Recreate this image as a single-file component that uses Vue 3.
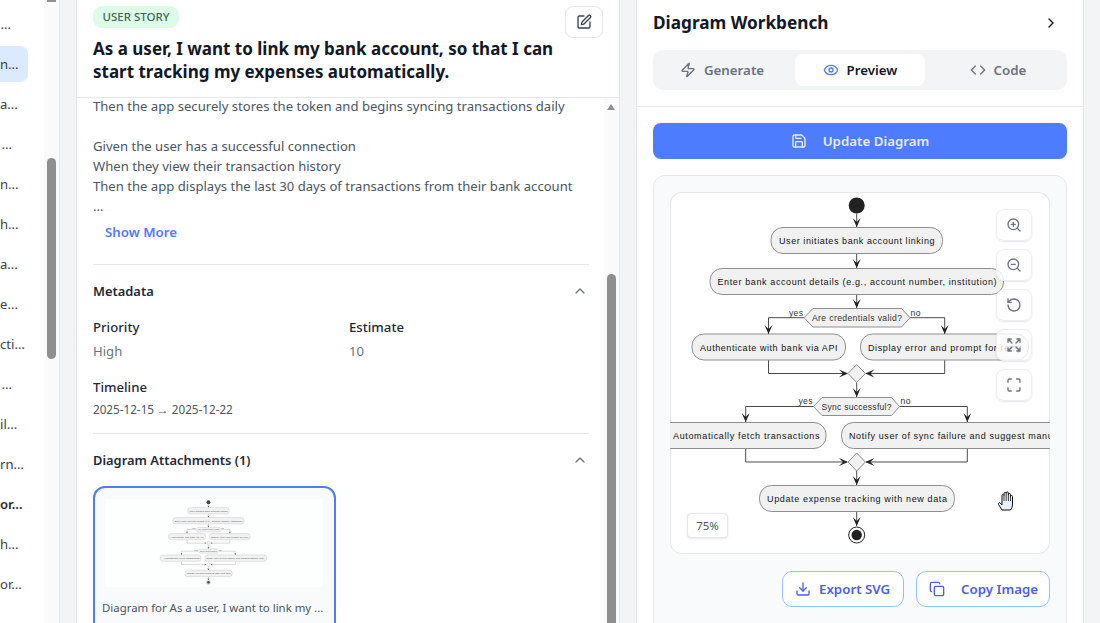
<script setup>
const criteria = `Then the app securely stores the token and begins syncing transactions daily

Given the user has a successful connection
When they view their transaction history
Then the app displays the last 30 days of transactions from their bank account
...`

const rows = [
  { text: '...', end: 11 },
  { text: 'n...', end: 14, active: true },
  { text: 'a...', end: 14 },
  { text: '...', end: 12 },
  { text: 'n...', end: 13 },
  { text: 'h...', end: 17 },
  { text: 'a...', end: 17 },
  { text: 'e...', end: 14 },
  { text: 'cti...', end: 19 },
  { text: '...', end: 12 },
  { text: 'il...', end: 16 },
  { text: 'rn...', end: 18 },
  { text: 'or...', end: 18, strong: true },
  { text: 'h...', end: 17 },
  { text: 'or...', end: 18 }
]

const nodes = [
  { x: 771, y: 227.5, w: 171.5, h: 26, text: 'User initiates bank account linking', tx: 779, tl: 155.5 },
  { x: 710, y: 268.5, w: 293.5, h: 26, text: 'Enter bank account details (e.g., account number, institution)', tx: 717.5, tl: 279 },
  { x: 692, y: 334, w: 153.5, h: 26, text: 'Authenticate with bank via API', tx: 700, tl: 137.5 },
  { x: 860.5, y: 334, w: 168, h: 26, text: 'Display error and prompt for retry', tx: 868, tl: 153 },
  { x: 658, y: 422.5, w: 168, h: 26, text: 'Automatically fetch transactions', tx: 673, tl: 146.5 },
  { x: 841.5, y: 422.5, w: 255, h: 26, text: 'Notify user of sync failure and suggest manual entry', tx: 849, tl: 238 },
  { x: 759.5, y: 485.5, w: 195, h: 26, text: 'Update expense tracking with new data', tx: 767, tl: 180 }
]

const decisions = [
  { points: '804,317.7 813,308.5 901.5,308.5 910,317.7 901.5,327 813,327', text: 'Are credentials valid?', tx: 812, ty: 321, tl: 90 },
  { points: '813.5,406.5 822,397.5 891.5,397.5 899.5,406.5 891.5,415.5 822,415.5', text: 'Sync successful?', tx: 821.5, ty: 409.5, tl: 70 }
]

const merges = ['848,373.5 856.7,364.5 865.4,373.5 856.7,382.5', '848,462 856.7,453 865.4,462 856.7,471']

const labels = [
  { text: 'yes', x: 789, y: 316, tl: 14 },
  { text: 'no', x: 910.5, y: 316, tl: 10 },
  { text: 'yes', x: 798.5, y: 404, tl: 14 },
  { text: 'no', x: 900.5, y: 404, tl: 10 }
]

const lines = [
  'M856.7 213.5V227', 'M856.7 253.5V268', 'M856.7 294.5V308',
  'M804 317.7H768.5V334', 'M910 317.7H944.7V334',
  'M768.5 360V373.5H847', 'M944.7 360V373.5H866',
  'M856.7 382.5V397', 'M813.5 406.5H745.7V422', 'M899.5 406.5H967.3V422',
  'M745.7 448.5V462H847', 'M967.3 448.5V462H866',
  'M856.7 471V485', 'M856.7 511.5V526'
]

const down = (x, y) => `M${x} ${y}L${x - 4} ${y - 9}L${x} ${y - 5}L${x + 4} ${y - 9}Z`
const right = (x, y) => `M${x} ${y}L${x - 9} ${y - 4}L${x - 5} ${y}L${x - 9} ${y + 4}Z`
const left = (x, y) => `M${x} ${y}L${x + 9} ${y - 4}L${x + 5} ${y}L${x + 9} ${y + 4}Z`

const arrows = [
  down(856.7, 227), down(856.7, 268), down(856.7, 308),
  down(768.5, 334), down(944.7, 334),
  right(848, 373.5), left(865.4, 373.5), down(856.7, 397),
  down(745.7, 422), down(967.3, 422),
  right(848, 462), left(865.4, 462), down(856.7, 485), down(856.7, 526)
]
</script>

<template>
  <div class="app">
    <aside class="side">
      <div class="side-list">
        <div v-for="(row, i) in rows" :key="i" class="side-row" :class="{ active: row.active, strong: row.strong }">
          <span class="side-text" :style="{ width: row.end + 'px' }">{{ row.text }}</span>
        </div>
      </div>
      <div class="side-track">
        <span class="side-top"></span>
        <span class="side-thumb"></span>
      </div>
    </aside>

    <main class="story">
      <header class="story-head">
        <div class="story-top">
          <span class="badge">USER STORY</span>
          <button class="edit">
            <svg class="i" viewBox="0 0 24 24" width="16" height="16"><path d="M12 3H5a2 2 0 0 0-2 2v14a2 2 0 0 0 2 2h14a2 2 0 0 0 2-2v-7"/><path d="M18.375 2.625a1 1 0 0 1 3 3l-9.013 9.014a2 2 0 0 1-.853.505l-2.873.84a.5.5 0 0 1-.62-.62l.84-2.873a2 2 0 0 1 .506-.852z"/></svg>
          </button>
        </div>
        <h1>As a user, I want to link my bank account, so that I can start tracking my expenses automatically.</h1>
      </header>
      <div class="story-scroll">
        <div class="story-body">
          <p class="criteria">{{ criteria }}</p>
          <a class="more">Show More</a>
          <section class="sec meta">
            <div class="sec-head">
              <h2>Metadata</h2>
              <svg class="i chev" viewBox="0 0 24 24" width="16" height="16"><path d="m18 15-6-6-6 6"/></svg>
            </div>
            <div class="meta-grid">
              <div><h3>Priority</h3><p>High</p></div>
              <div><h3>Estimate</h3><p>10</p></div>
            </div>
            <h3 class="tl">Timeline</h3>
            <p class="dates">2025-12-15 → 2025-12-22</p>
          </section>
          <section class="sec attach">
            <div class="sec-head">
              <h2>Diagram Attachments (1)</h2>
              <svg class="i chev" viewBox="0 0 24 24" width="16" height="16"><path d="m18 15-6-6-6 6"/></svg>
            </div>
            <div class="thumb-card">
              <svg class="thumb" viewBox="431 192 897 362" width="218" height="88"><use href="#activity" /></svg>
              <p>Diagram for As a user, I want to link my ...</p>
            </div>
          </section>
        </div>
        <div class="story-track">
          <span class="arrow-up"></span>
          <span class="story-thumb"></span>
        </div>
      </div>
    </main>

    <section class="bench">
      <div class="bench-head">
        <div class="bench-title">
          <h2>Diagram Workbench</h2>
          <svg class="i dark" viewBox="0 0 24 24" width="16" height="16"><path d="m9 18 6-6-6-6"/></svg>
        </div>
        <div class="tabs">
          <div class="tab">
            <svg class="i" viewBox="0 0 24 24" width="16" height="16"><path d="M4 14a1 1 0 0 1-.78-1.63l9.9-10.2a.5.5 0 0 1 .86.46l-1.92 6.02A1 1 0 0 0 13 10h7a1 1 0 0 1 .78 1.63l-9.9 10.2a.5.5 0 0 1-.86-.46l1.92-6.02A1 1 0 0 0 11 14z"/></svg>
            Generate
          </div>
          <div class="tab on">
            <svg class="i" viewBox="0 0 24 24" width="16" height="16"><path d="M2.062 12.348a1 1 0 0 1 0-.696 10.75 10.75 0 0 1 19.876 0 1 1 0 0 1 0 .696 10.75 10.75 0 0 1-19.876 0"/><circle cx="12" cy="12" r="3"/></svg>
            Preview
          </div>
          <div class="tab">
            <svg class="i" viewBox="0 0 24 24" width="16" height="16"><path d="m16 18 6-6-6-6"/><path d="m8 6-6 6 6 6"/></svg>
            Code
          </div>
        </div>
      </div>
      <div class="bench-body">
        <button class="update">
          <svg class="i" viewBox="0 0 24 24" width="16" height="16"><path d="M15.2 3a2 2 0 0 1 1.4.6l3.8 3.8a2 2 0 0 1 .6 1.4V19a2 2 0 0 1-2 2H5a2 2 0 0 1-2-2V5a2 2 0 0 1 2-2z"/><path d="M17 21v-7a1 1 0 0 0-1-1H8a1 1 0 0 0-1 1v7"/><path d="M7 3v4a1 1 0 0 0 1 1h7"/></svg>
          Update Diagram
        </button>
        <div class="stage">
          <div class="canvas">
            <svg class="diagram" viewBox="670 192 380 362" width="380" height="362">
              <g id="activity">
                <circle cx="856.7" cy="205.5" r="8" class="dot" />
                <path v-for="(d, i) in lines" :key="'l' + i" :d="d" class="ln" />
                <g v-for="(n, i) in nodes" :key="'n' + i">
                  <rect :x="n.x" :y="n.y" :width="n.w" :height="n.h" rx="12" class="box" />
                  <text :x="n.tx" :y="n.y + 16.5" :textLength="n.tl" class="t">{{ n.text }}</text>
                </g>
                <g v-for="(d, i) in decisions" :key="'d' + i">
                  <polygon :points="d.points" class="box" />
                  <text :x="d.tx" :y="d.ty" :textLength="d.tl" class="t small">{{ d.text }}</text>
                </g>
                <polygon v-for="(m, i) in merges" :key="'m' + i" :points="m" class="box" />
                <text v-for="(l, i) in labels" :key="'t' + i" :x="l.x" :y="l.y" :textLength="l.tl" class="t small">{{ l.text }}</text>
                <path v-for="(d, i) in arrows" :key="'a' + i" :d="d" class="dot" />
                <circle cx="856.7" cy="535" r="8" class="ring" />
                <circle cx="856.7" cy="535" r="5.2" class="dot" />
              </g>
            </svg>
            <div class="tools">
              <button class="tool"><svg class="i" viewBox="0 0 24 24" width="16" height="16"><circle cx="11" cy="11" r="8"/><path d="m21 21-4.3-4.3"/><path d="M11 8v6"/><path d="M8 11h6"/></svg></button>
              <button class="tool"><svg class="i" viewBox="0 0 24 24" width="16" height="16"><circle cx="11" cy="11" r="8"/><path d="m21 21-4.3-4.3"/><path d="M8 11h6"/></svg></button>
              <button class="tool"><svg class="i" viewBox="0 0 24 24" width="16" height="16"><path d="M3 12a9 9 0 1 0 9-9 9.75 9.75 0 0 0-6.74 2.74L3 8"/><path d="M3 3v5h5"/></svg></button>
              <button class="tool"><svg class="i" viewBox="0 0 24 24" width="16" height="16"><path d="m21 21-6-6m6 6v-4.8m0 4.8h-4.8"/><path d="M3 16.2V21m0 0h4.8M3 21l6-6"/><path d="M21 7.8V3m0 0h-4.8M21 3l-6 6"/><path d="M3 7.8V3m0 0h4.8M3 3l6 6"/></svg></button>
              <button class="tool"><svg class="i" viewBox="0 0 24 24" width="16" height="16"><path d="M8 3H5a2 2 0 0 0-2 2v3"/><path d="M21 8V5a2 2 0 0 0-2-2h-3"/><path d="M3 16v3a2 2 0 0 0 2 2h3"/><path d="M16 21h3a2 2 0 0 0 2-2v-3"/></svg></button>
            </div>
            <div class="zoom-chip">75%</div>
            <svg class="hand" viewBox="0 0 20 22" width="20" height="22">
              <path d="M5 20 1.5 14.5c-.8-1.2.8-2.4 1.8-1.4L5 15V5.5c0-1.4 2-1.4 2 0V3.5c0-1.5 2.2-1.5 2.2 0V3c0-1.5 2.2-1.5 2.2 0v1.5c0-1.4 2.1-1.4 2.1 0v2c0-1.3 2-1.3 2 0V14c0 3-1 4.5-2 6z" class="glove"/>
              <path d="M7 5.5V11M9.2 3.5V11M11.4 4V11M13.5 6V11" class="glove-line"/>
            </svg>
          </div>
          <div class="actions">
            <button class="act export">
              <svg class="i" viewBox="0 0 24 24" width="16" height="16"><path d="M12 15V3"/><path d="M21 15v4a2 2 0 0 1-2 2H5a2 2 0 0 1-2-2v-4"/><path d="m7 10 5 5 5-5"/></svg>
              Export SVG
            </button>
            <button class="act copy">
              <svg class="i" viewBox="0 0 24 24" width="16" height="16"><rect x="8" y="8" width="14" height="14" rx="2"/><path d="M4 16c-1.1 0-2-.9-2-2V4c0-1.1.9-2 2-2h10c1.1 0 2 .9 2 2"/></svg>
              Copy Image
            </button>
          </div>
        </div>
      </div>
    </section>
  </div>
</template>

<style>
html, body { margin: 0; overflow: hidden; }
</style>

<style scoped>
.app {
  width: 1100px;
  height: 623px;
  display: flex;
  overflow: hidden;
  background: #f3f4f6;
  font-family: "Noto Sans", "Open Sans", sans-serif;
  color: #111827;
}
h1, h2, h3, p { margin: 0; }
button { font-family: inherit; cursor: pointer; }
.i { fill: none; stroke: currentColor; stroke-width: 2; stroke-linecap: round; stroke-linejoin: round; flex: none; display: block; }

.side {
  width: 60px;
  flex: none;
  display: flex;
  background: #fff;
  border-right: 1px solid #e5e7eb;
  box-sizing: border-box;
}
.side-list { width: 44px; padding-top: 6px; display: flex; flex-direction: column; gap: 4px; }
.side-row { width: 28px; height: 36px; display: flex; align-items: center; border-radius: 0 8px 8px 0; font-size: 13.1px; color: #374151; }
.side-row.active { background: #dbeafe; }
.side-row.strong { font-weight: 600; color: #1f2937; }
.side-text { display: block; text-align: right; white-space: nowrap; }
.side-track { width: 15px; background: #fafafa; position: relative; }
.side-top { position: absolute; left: 3px; top: 0; width: 9px; height: 2px; background: #8f8f8f; }
.side-thumb { position: absolute; left: 3px; top: 158px; width: 9px; height: 201px; border-radius: 5px; background: #8f8f8f; }

.story {
  width: 544px;
  margin-left: 16px;
  flex: none;
  display: flex;
  flex-direction: column;
  background: #fff;
  border: solid #e5e7eb;
  border-width: 0 1px;
  box-sizing: border-box;
}
.story-head { height: 98px; box-sizing: border-box; padding: 6px 16px 0; border-bottom: 1px solid #e5e7eb; flex: none; }
.story-top { display: flex; justify-content: space-between; align-items: flex-start; height: 32px; }
.badge { height: 22px; line-height: 22px; padding: 0 9.5px; border-radius: 9px; background: #dcfce7; color: #3f6659; font-size: 11.5px; font-weight: 500; }
.edit { width: 38px; height: 32px; background: #fff; border: 1px solid #e5e7eb; border-radius: 8px; display: flex; align-items: center; justify-content: center; color: #374151; padding: 0; }
.story-head h1 { font-size: 17px; line-height: 23px; font-weight: 700; margin-top: -1px; color: #111827; width: 490px; }
.story-scroll { flex: 1; min-height: 0; display: flex; overflow: hidden; }
.story-body { flex: 1; padding: 0 15px 0 16px; margin-top: -2px; min-width: 0; }
.criteria { font-size: 13.1px; line-height: 20px; color: #4b5563; white-space: pre-line; }
.more { display: block; margin: 6px 0 0 12px; font-size: 13.3px; line-height: 20px; font-weight: 600; color: #4d7cfe; }
.sec { border-top: 1px solid #e5e7eb; }
.meta { margin-top: 22px; padding: 16px 0 15px; }
.attach { padding-top: 16px; }
.sec-head { display: flex; justify-content: space-between; align-items: center; height: 20px; padding-right: 1px; }
.sec-head h2 { font-size: 12.9px; line-height: 20px; font-weight: 600; color: #1f2937; }
.chev { color: #6b7280; }
.meta-grid { display: grid; grid-template-columns: 256px 1fr; margin-top: 16px; }
h3 { font-size: 13.2px; line-height: 20px; font-weight: 500; color: #1f2937; }
.meta-grid p { margin-top: 4px; font-size: 13.1px; line-height: 20px; color: #6b7280; }
.tl { margin-top: 16px; }
.dates { margin-top: 3px; font-size: 11.7px; line-height: 18px; color: #4b5563; }
.thumb-card { width: 243px; height: 160px; margin-top: 16px; box-sizing: border-box; padding: 11px 10px; border: 2px solid #4d7cfe; border-radius: 12px; background: #f8fafc; }
.thumb { display: block; background: #fff; opacity: .85; }
.thumb-card p { margin: 12px 0 0 -3px; font-size: 11.4px; line-height: 18px; color: #4b5563; white-space: nowrap; }
.story-track { width: 15px; flex: none; background: #fafafa; position: relative; }
.arrow-up { position: absolute; left: 3px; top: 6px; border: solid transparent; border-width: 0 4.5px 6px; border-bottom-color: #8f8f8f; }
.story-thumb { position: absolute; left: 3px; top: 176px; width: 9px; height: 400px; border-radius: 5px; background: #8f8f8f; }

.bench {
  width: 448px;
  margin-left: 16px;
  flex: none;
  background: #fff;
  border: solid #e5e7eb;
  border-width: 0 1px;
  box-sizing: border-box;
  display: flex;
  flex-direction: column;
}
.bench-head { padding: 10px 16px 16px; border-bottom: 1px solid #e5e7eb; }
.bench-title { display: flex; justify-content: space-between; align-items: center; height: 26px; padding-right: 8px; }
.bench-title h2 { font-size: 17.2px; line-height: 26px; font-weight: 700; color: #111827; }
.dark { color: #111827; }
.tabs { margin-top: 14px; height: 40px; box-sizing: border-box; padding: 4px; display: flex; gap: 8px; background: #f3f4f6; border-radius: 10px; }
.tab { flex: 1; display: flex; align-items: center; justify-content: center; gap: 8px; border-radius: 8px; font-size: 13.3px; font-weight: 600; color: #6b7280; }
.tab.on { background: #fff; color: #111827; }
.tab.on .i { color: #4d7cfe; }
.bench-body { flex: 1; min-height: 0; padding: 16px 16px 0; }
.update { width: 100%; height: 36px; border: 0; border-radius: 8px; background: #4d7cfe; color: #e6edff; display: flex; align-items: center; justify-content: center; gap: 16px; font-size: 13.3px; font-weight: 600; padding: 0; }
.stage { margin-top: 16px; height: 500px; box-sizing: border-box; padding: 16px; background: #f8fafc; border: 1px solid #e5e7eb; border-radius: 12px; }
.canvas { height: 362px; position: relative; overflow: hidden; box-sizing: border-box; background: #fff; border-radius: 12px; box-shadow: inset 0 0 0 1px #e5e7eb; }
.diagram { display: block; }
.ln { fill: none; stroke: #4a4a4a; stroke-width: 1; }
.box { fill: #f1f1f1; stroke: #8f8f8f; stroke-width: 1; }
.dot { fill: #222; }
.ring { fill: #fff; stroke: #222; stroke-width: 1; }
.t { font-family: "Liberation Sans", Arial, sans-serif; font-size: 9px; fill: #111; }
.small { font-size: 8.6px; fill: #333; }
.tools { position: absolute; top: 17px; right: 18px; display: flex; flex-direction: column; gap: 8px; }
.tool { width: 36px; height: 32px; padding: 0; display: flex; align-items: center; justify-content: center; border: 1px solid #eceef1; border-radius: 8px; background: rgba(255, 255, 255, .8); color: #6b7280; box-shadow: 0 1px 2px rgba(0, 0, 0, .1); }
.zoom-chip { position: absolute; left: 17px; bottom: 16px; width: 41px; height: 25px; box-sizing: border-box; border: 1px solid #e5e7eb; border-radius: 4px; background: #fff; box-shadow: 0 1px 2px rgba(0, 0, 0, .1); font-size: 11.4px; line-height: 23px; text-align: center; color: #4b5563; }
.hand { position: absolute; left: 327px; top: 298px; }
.glove { fill: #eaf2fb; stroke: #111; stroke-width: 1; }
.glove-line { fill: none; stroke: #111; stroke-width: .8; }
.actions { margin-top: 17px; display: flex; justify-content: flex-end; gap: 12px; }
.act { height: 36px; box-sizing: border-box; display: flex; align-items: center; padding: 0; border: 1px solid #93c5fd; border-radius: 10px; background: #fff; color: #4a5ef0; font-size: 13.3px; font-weight: 600; }
.export { width: 122px; padding-left: 12px; gap: 8px; }
.copy { width: 134px; padding-left: 12px; gap: 16px; }
</style>
